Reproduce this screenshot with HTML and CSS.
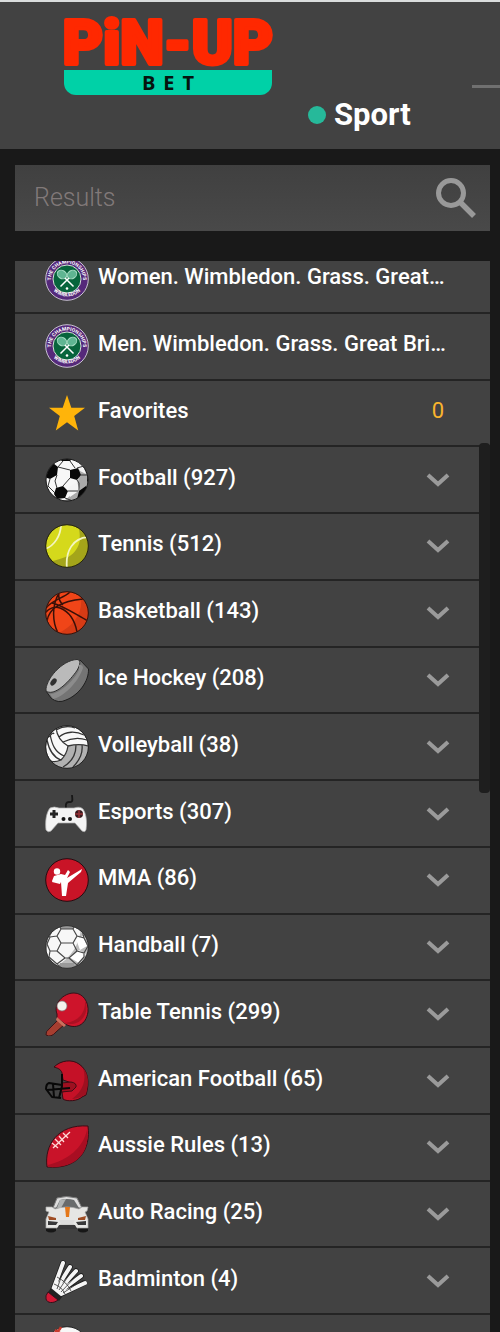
FILE: index.html
```html
<!DOCTYPE html>
<html lang="en">
<head>
<meta charset="utf-8">
<meta name="viewport" content="width=device-width, initial-scale=1">
<title>Pin-Up Bet</title>
<link rel="stylesheet" href="styles.css">
</head>
<body>
<svg class="sprite" aria-hidden="true">
  <defs>
    <clipPath id="ball"><circle cx="22" cy="22" r="21"/></clipPath>
    <path id="arc-top" d="M6.2 25A16 16 0 1 1 37.8 25"/>
    <path id="arc-bottom" d="M6 31A19.5 19.5 0 0 0 38 31"/>
  </defs>
  <symbol id="wimbledon" viewBox="0 0 44 44">
    <circle cx="22" cy="22" r="21.3" fill="#55297a" stroke="#c9c2d2"/>
    <circle cx="22" cy="22" r="14" fill="#07643c" stroke="#d5ddd8"/>
    <text class="crest-text"><textPath href="#arc-top" startOffset="50%">THE CHAMPIONSHIPS</textPath></text>
    <text class="crest-text"><textPath href="#arc-bottom" startOffset="50%">WIMBLEDON</textPath></text>
    <g fill="#5fb592" stroke="#a9dfc6"><ellipse cx="17" cy="17.5" rx="5" ry="4" transform="rotate(35 17 17.5)"/><ellipse cx="27" cy="17.5" rx="5" ry="4" transform="rotate(-35 27 17.5)"/></g>
    <path d="M20 21l8.500 8.500M24 21l-8.500 8.500" stroke="#fff" stroke-width="1.500"/>
    <circle cx="22" cy="31.500" r="1.300" fill="#fff"/>
  </symbol>
  <symbol id="star" viewBox="0 0 44 44"><path fill="#ffb40a" d="M22 4l4.300 12.800H40L29.200 25l4 14.500L22 31.300l-11.200 8.200 4-14.500L4 16.800h13.700z"/></symbol>
  <symbol id="football" viewBox="0 0 44 44">
    <g clip-path="url(#ball)"><rect width="44" height="44" fill="#f7f7f7"/>
    <path d="M30 0c7 12 6 30-12 44h26V0z" fill="#aaa"/>
    <path d="M28 1l10 6 3 9-6-3zM22 33l2-4 8-5 3 8-10 7z" fill="#f4f4f4"/>
    <path d="M3 10l5-5 5 4-1 8-7 4-5-2zM25 12l8-2 3 7-4 5-7-2zM11 30l7-2 5 5-3 7-8 1-3-5zM34 33l7-5 3 6-8 8-4-1zM13 0h15l-3 3h-8zM43 14h2v12l-3-3z" fill="#080808"/>
    <path d="M13 9l5-6M25 3l5 7M12 17l-2 6 2 7M25 20l-7 8M32 22l2 3v8M23 33l10 0M5 21l-2 7 7 7M36 17l6 0M32 10l7-2M13 9l12 3M20 40l8 3" fill="none" stroke="#333"/></g>
    <circle cx="22" cy="22" r="21" fill="none" stroke="#151515"/>
  </symbol>
  <symbol id="tennis" viewBox="0 0 44 44">
    <g clip-path="url(#ball)"><rect width="44" height="44" fill="#d5d91b"/><path d="M33 2c5 14 0 31-26 35v7h37V2z" fill="#a4a51a"/><path d="M39 13c-10 2-15 11-16 20 7-4 11-10 12-18z" fill="#d5d91b"/>
    <path d="M16 0C16 12 9 22 0 25M43 13C28 14 20 27 22 45" fill="none" stroke="#f3f5c0" stroke-width="1.800"/></g>
    <circle cx="22" cy="22" r="21.300" fill="none" stroke="#29280c"/>
  </symbol>
  <symbol id="basketball" viewBox="0 0 44 44">
    <g clip-path="url(#ball)"><rect width="44" height="44" fill="#f04518"/><path d="M34 0c7 18-3 35-24 44h34V0z" fill="#d63b15"/>
    <path d="M14 2C7 14 7 30 13 42M1 17c6-8 18-10 24-16M7 12c10 2 23 11 36 18M2 30C4 17 17 10 38 8M0 22c4-5 10-7 15-5 10 4 15 13 17 24M14 2c-1 5 1 9 4 12" fill="none" stroke="#391008" stroke-width="1.500"/></g>
    <circle cx="22" cy="22" r="21.300" fill="none" stroke="#391008"/>
  </symbol>
  <symbol id="puck" viewBox="0 0 44 44">
    <path d="M1 33L6 40q7 6 15 2C34 37 44 23 43.500 11L35 2z" fill="#747474" stroke="#202020" stroke-linejoin="round"/>
    <path d="M1 33C0 22 17 2 32 1.500c5 0 3 8-3 15C20 28 8 38 1 33z" fill="#bababa" stroke="#303030"/>
    <path d="M5 36c9 0 23-12 29-24v-5c3-1 4 2 4 3C33 25 18 39 8 41z" fill="#8c8c8c"/>
    <ellipse cx="8.500" cy="24" rx="2.500" ry="4" transform="rotate(38 8.500 24)" fill="#303030"/>
  </symbol>
  <symbol id="volleyball" viewBox="0 0 44 44">
    <g clip-path="url(#ball)"><rect width="44" height="44" fill="#f8f8f8"/><path d="M44 20H23c-1 8-3 12-8 15l-8 3 7 6h30z" fill="#b1b1b1"/>
    <path d="M11 3c1 8 5 14 12 18 8-2 14-2 20 0M23 21c-1 7-4 11-7 14C8 32 4 25 2 15M14 12C21 6 31 6 39 10M11 5C18 1 25 1 30 3M18 17c8-4 15-5 24-2M16 35c-5 2-8 2-10 1M5 9c2 11 5 18 14 22M31 20c0 10-4 17-13 22M37 20c1 8-2 15-9 22M9 9c-1-2-3 0-5 3" fill="none" stroke="#343434" stroke-width="1.300"/></g>
    <circle cx="22" cy="22" r="21.300" fill="none" stroke="#222"/>
  </symbol>
  <symbol id="gamepad" viewBox="0 0 44 44">
    <path d="M21 16q-1-6 3-6c5 1 3-4 3-7" fill="none" stroke="#171717" stroke-width="1.800"/>
    <path d="M5 16q4-2 9 0h15q6-2 9 1c4 6 4 15 3 21q-1 3-4 1l-7-8H13l-7 8q-3 2-5-1C0 30 1 21 5 16z" fill="#f4f4f4" stroke="#aaa" stroke-width=".7"/>
    <path d="M9 18v8M5 22h8" stroke="#242424" stroke-width="3"/><circle cx="34" cy="22" r="4" fill="#391b1e"/><path d="M34 18v8M30 22h8" stroke="#973338" stroke-width="1.500"/><circle cx="18.500" cy="27" r="2" fill="#161616"/><circle cx="25" cy="27" r="2" fill="#161616"/>
  </symbol>
  <symbol id="mma" viewBox="0 0 44 44">
    <circle cx="22" cy="22" r="21.300" fill="#c91427" stroke="#260b10"/><path d="M37 9a20 20 0 0 1-28 29 20 20 0 0 0 28-29z" fill="#b70d20"/>
    <circle cx="12" cy="13.500" r="3.200" fill="#fff"/><path d="M9 18l7-2 4 1 3-5 2 2-3 6 15-9-1 3-13 11-2 13h-4l-1-14-5 1-4-2zM8 21l8 3-1 2-8-2z" fill="#fff"/>
  </symbol>
  <symbol id="handball" viewBox="0 0 44 44">
    <g clip-path="url(#ball)"><rect width="44" height="44" fill="#f7f7f7"/><path d="M36 2c-1 16-9 31-26 40h34V2z" fill="#bdbdbd"/><path d="M24 32l10-7 7 4-7 9zM31 14l7-3 4 10-7 4z" fill="#fff"/><path d="M14 0h16l-2 4H16zM1 13l2 4-2 12zM15 38h14l2 6H13z" fill="#999"/>
    <path d="M16 18h12l4 8-8 7h-4l-8-7zM16 18l-4-7 4-7h12l4 7-4 7M12 11l-7 1-3 7 3 7 7 0M32 11l7 2 4 8-4 7-7-2M5 26l-1 6 8 7 8-6M24 33l8 7 7-8V28M12 39l4 4M32 40l-4 4M4 12l3-6M39 13l-2-8M16 4l-2-4M28 4l2-4" fill="none" stroke="#484848" stroke-width="1.200"/></g>
    <circle cx="22" cy="22" r="21.300" fill="none" stroke="#333"/>
  </symbol>
  <symbol id="paddle" viewBox="0 0 44 44">
    <path d="M15 26l5 6-9 8q-5 6-10 3-1-3 4-7z" fill="#a63e30" stroke="#3b1518"/><path d="M12 22C8 12 18 1 29 1c9 0 15 9 14 19-2 13-12 18-23 12l-8-6z" fill="#ce142b" stroke="#371119"/><path d="M40 8c1 14-8 22-20 23 13 5 26-8 20-23z" fill="#ac1023"/><path d="M12 25l9 8-2 2-8-7z" fill="#ca705e"/><circle cx="17" cy="14" r="5" fill="#f5f2ed" stroke="#777" stroke-width=".7"/>
  </symbol>
  <symbol id="helmet" viewBox="0 0 44 44">
    <path d="M9 8C16 1 27 0 34 5c9 6 11 18 7 31l-4 2c-4 4-15 5-19 2l-1-7 8-2 2-7-9-3-1-7C16 10 12 9 9 8z" fill="#c51127" stroke="#370b13"/><path d="M38 9c4 12 0 23-11 31 6 0 12-4 14-5 3-10 3-20-3-26z" fill="#9d1020"/><path d="M17 24l9-1q6 1 5 5l-4 4-11 1z" fill="#9d1020" stroke="#430c15"/>
    <path d="M17 26L4 24q-3 1-3 6l6 8 9 1M2 31l23-2M17 15v12l-3 12M8 25l1 13" fill="none" stroke="#080808" stroke-width="2" stroke-linejoin="round"/>
  </symbol>
  <symbol id="rugby" viewBox="0 0 44 44">
    <path d="M2 42C-1 20 13-1 43 1c3 23-9 44-41 41z" fill="#c91329" stroke="#351016"/><path d="M42 5C38 23 23 35 3 40v2c29 2 42-15 39-37z" fill="#a80e22"/><path d="M8 23L25 7M7 18l6 5M10 14l6 6M14 11l5 6M18 8l5 5" stroke="#ffdad7" stroke-width="1.300"/>
  </symbol>
  <symbol id="car" viewBox="0 0 44 44">
    <path d="M1 32h10v7q-5 3-10 0zM33 32h10v7q-5 3-10 0z" fill="#171717"/><path d="M8 16L12 6q9-3 20 0l5 10z" fill="#ddd" stroke="#777"/><path d="M11 16l4-8q7-2 14 0l5 8z" fill="#686b6c"/><path d="M15 8l6-1-5 9h-4z" fill="#b0b3b3"/>
    <path d="M1 15h6l3 2q12-4 24 0l3-2h6l-1 4-2 1 3 7v9H32l-3-3H15l-3 3H1v-9l3-7-3-1z" fill="#e6e6e4" stroke="#aaa" stroke-width=".7"/><path d="M20 15h5l-1 10h-3z" fill="#e5781a"/><path d="M3 24l8 2v2H4zM41 24l-8 2v2h7z" fill="#9f4e25"/><path d="M3 29l10 1-2 3H3zM41 29l-10 1 2 3h8zM14 33h16l2 4H12z" fill="#39393a"/><path d="M14 28h16l-2 4H16z" fill="#ddd"/>
  </symbol>
  <symbol id="shuttle" viewBox="0 0 44 44">
    <g stroke="#1c1c1c" stroke-width="5.500" stroke-linecap="round"><path d="M8 31L18 4M10 32L25 8M12 33L31 12M13 34L36 17M14 36L39 24"/></g><g stroke="#f5f5f5" stroke-linecap="round"><path d="M8 31L18 4M10 32L25 8M12 33L31 12M13 34L36 17M14 36L40 24" stroke-width="4"/></g><path d="M12 18q10 5 14 14M9 25q8 3 11 10M12 30L20 7M14 31L28 10M16 33L33 15M18 34L38 21" fill="none" stroke="#333" stroke-width=".8"/><path d="M6 29l11 9-3 4-11-9z" fill="#222"/><path d="M3 33l10 8c-5 4-11 3-12-1q-1-3 2-7z" fill="#d21835" stroke="#34111a"/>
  </symbol>
  <symbol id="baseball" viewBox="0 0 44 44"><circle cx="22" cy="22" r="21.300" fill="#f7f7f7" stroke="#222"/><path d="M6 8q8-2 10-7M10 4l5 3M40 12c-9 4-11 15-4 25" fill="none" stroke="#c93a2d" stroke-width="2.500"/></symbol>
  <symbol id="chevron" viewBox="0 0 24 14"><path d="M2 2l10 9L22 2" fill="none" stroke="#9a9a9a" stroke-width="4"/></symbol>
</svg>

<header class="header">
  <a class="logo" href="#" aria-label="Pin-Up Bet">
    <svg class="wordmark" viewBox="0 0 208 56"><text x="104" y="50" class="wordmark-text">PiN-UP</text></svg>
    <span class="logo-bet">BET</span>
  </a>
  <nav class="nav"><a class="nav-link" href="#"><span class="dot"></span>Sport</a></nav>
  <span class="menu-line"></span>
</header>

<main class="main">
  <form class="search">
    <input class="search-input" type="search" placeholder="Results" aria-label="Results">
    <button class="search-button" type="button" aria-label="Search"><svg class="search-icon" viewBox="0 0 40 40"><circle cx="15" cy="15" r="12.500" fill="none" stroke="#999" stroke-width="5"/><path d="M24 24l14 14" stroke="#999" stroke-width="5.500"/></svg></button>
  </form>
  <section class="panel">
    <ul class="list">
      <li class="item"><a class="row" href="#"><svg class="icon"><use href="#wimbledon"/></svg><span class="label">Women. Wimbledon. Grass. Great…</span></a></li>
      <li class="item"><a class="row" href="#"><svg class="icon"><use href="#wimbledon"/></svg><span class="label">Men. Wimbledon. Grass. Great Bri…</span></a></li>
      <li class="item"><a class="row" href="#"><svg class="icon"><use href="#star"/></svg><span class="label">Favorites</span><span class="count">0</span></a></li>
      <li class="item"><button class="row" type="button"><svg class="icon"><use href="#football"/></svg><span class="label">Football (927)</span><svg class="chevron"><use href="#chevron"/></svg></button></li>
      <li class="item"><button class="row" type="button"><svg class="icon"><use href="#tennis"/></svg><span class="label">Tennis (512)</span><svg class="chevron"><use href="#chevron"/></svg></button></li>
      <li class="item"><button class="row" type="button"><svg class="icon"><use href="#basketball"/></svg><span class="label">Basketball (143)</span><svg class="chevron"><use href="#chevron"/></svg></button></li>
      <li class="item"><button class="row" type="button"><svg class="icon"><use href="#puck"/></svg><span class="label">Ice Hockey (208)</span><svg class="chevron"><use href="#chevron"/></svg></button></li>
      <li class="item"><button class="row" type="button"><svg class="icon"><use href="#volleyball"/></svg><span class="label">Volleyball (38)</span><svg class="chevron"><use href="#chevron"/></svg></button></li>
      <li class="item"><button class="row" type="button"><svg class="icon"><use href="#gamepad"/></svg><span class="label">Esports (307)</span><svg class="chevron"><use href="#chevron"/></svg></button></li>
      <li class="item"><button class="row" type="button"><svg class="icon"><use href="#mma"/></svg><span class="label">MMA (86)</span><svg class="chevron"><use href="#chevron"/></svg></button></li>
      <li class="item"><button class="row" type="button"><svg class="icon"><use href="#handball"/></svg><span class="label">Handball (7)</span><svg class="chevron"><use href="#chevron"/></svg></button></li>
      <li class="item"><button class="row" type="button"><svg class="icon"><use href="#paddle"/></svg><span class="label">Table Tennis (299)</span><svg class="chevron"><use href="#chevron"/></svg></button></li>
      <li class="item"><button class="row" type="button"><svg class="icon"><use href="#helmet"/></svg><span class="label">American Football (65)</span><svg class="chevron"><use href="#chevron"/></svg></button></li>
      <li class="item"><button class="row" type="button"><svg class="icon"><use href="#rugby"/></svg><span class="label">Aussie Rules (13)</span><svg class="chevron"><use href="#chevron"/></svg></button></li>
      <li class="item"><button class="row" type="button"><svg class="icon"><use href="#car"/></svg><span class="label">Auto Racing (25)</span><svg class="chevron"><use href="#chevron"/></svg></button></li>
      <li class="item"><button class="row" type="button"><svg class="icon"><use href="#shuttle"/></svg><span class="label">Badminton (4)</span><svg class="chevron"><use href="#chevron"/></svg></button></li>
      <li class="item"><div class="row"><svg class="icon"><use href="#baseball"/></svg></div></li>
    </ul>
    <span class="scroll-thumb"></span>
  </section>
</main>
</body>
</html>
```

FILE: styles.css
```css
* { box-sizing: border-box; }
body {
  margin: 0;
  min-height: 100vh;
  display: flex;
  flex-direction: column;
  background: #191919;
  color: #fff;
  font-family: Roboto, "Liberation Sans", sans-serif;
}
a { color: inherit; text-decoration: none; }
button { font: inherit; color: inherit; border: 0; background: none; }
.sprite { position: absolute; width: 0; height: 0; overflow: visible; }
.crest-text { font: 700 5px Roboto, sans-serif; fill: #fff; text-anchor: middle; }

.header {
  display: flex;
  align-items: flex-start;
  gap: 36px;
  padding: 12px 0 16px 64px;
  border-top: 2px solid #dadddd;
  background: #424242;
}
.logo { display: flex; flex-direction: column; width: 208px; margin-bottom: 38px; }
.wordmark { display: block; height: 56px; overflow: visible; }
.wordmark-text {
  font: 900 62px Roboto, sans-serif;
  fill: #ff2800;
  stroke: #ff2800;
  stroke-width: 4px;
  stroke-linejoin: round;
  text-anchor: middle;
}
.logo-bet {
  height: 25px;
  padding-left: 8px;
  border-radius: 0 0 12px 12px;
  background: #00d1a7;
  color: #06140f;
  font: 700 20px/25px "Open Sans", sans-serif;
  letter-spacing: 8px;
  text-align: center;
}
.nav { align-self: flex-end; }
.nav-link {
  display: flex;
  align-items: center;
  gap: 8px;
  font-size: 31px;
  font-weight: 700;
  line-height: 36px;
}
.dot { width: 18px; height: 18px; border-radius: 50%; background: #26b99a; }
.menu-line { width: 28px; height: 3px; margin: 71px 0 0 auto; background: #707070; }

.main { flex: 1; display: flex; flex-direction: column; gap: 30px; padding: 16px 10px 0 15px; }
.search {
  display: flex;
  align-items: center;
  height: 66px;
  padding: 0 14px 0 19px;
  background: linear-gradient(#404040, #494949);
}
.search-input {
  flex: 1;
  min-width: 0;
  padding: 0;
  border: 0;
  outline: 0;
  background: none;
  color: #fff;
  font: 300 25px/32px Roboto, sans-serif;
}
.search-input::placeholder { color: #817979; }
.search-button { padding: 0; }
.search-icon { display: block; width: 40px; height: 40px; }

.panel { position: relative; flex: 1; display: flex; overflow: hidden; background: #424242; }
.list {
  flex: 1;
  display: flex;
  flex-direction: column;
  min-width: 0;
  margin: -14px 0 -50px;
  padding: 0;
  list-style: none;
}
.item { flex: 1 0 60px; display: flex; border-bottom: 2px solid #242424; }
.row {
  flex: 1;
  display: flex;
  align-items: center;
  gap: 9px;
  min-width: 0;
  padding: 0 40px 0 30px;
  text-align: left;
}
.icon { flex: none; width: 44px; height: 44px; }
.label { flex: 1; padding-bottom: 4px; font-size: 22px; font-weight: 500; line-height: 28px; white-space: nowrap; }
.chevron { flex: none; width: 24px; height: 14px; }
.count { width: 24px; padding-bottom: 4px; color: #f9b42d; font-size: 22px; line-height: 28px; text-align: center; }
.scroll-thumb {
  position: absolute;
  top: 182px;
  right: 0;
  width: 11px;
  height: 350px;
  border-radius: 4px;
  background: #1e1e1e;
}
```
